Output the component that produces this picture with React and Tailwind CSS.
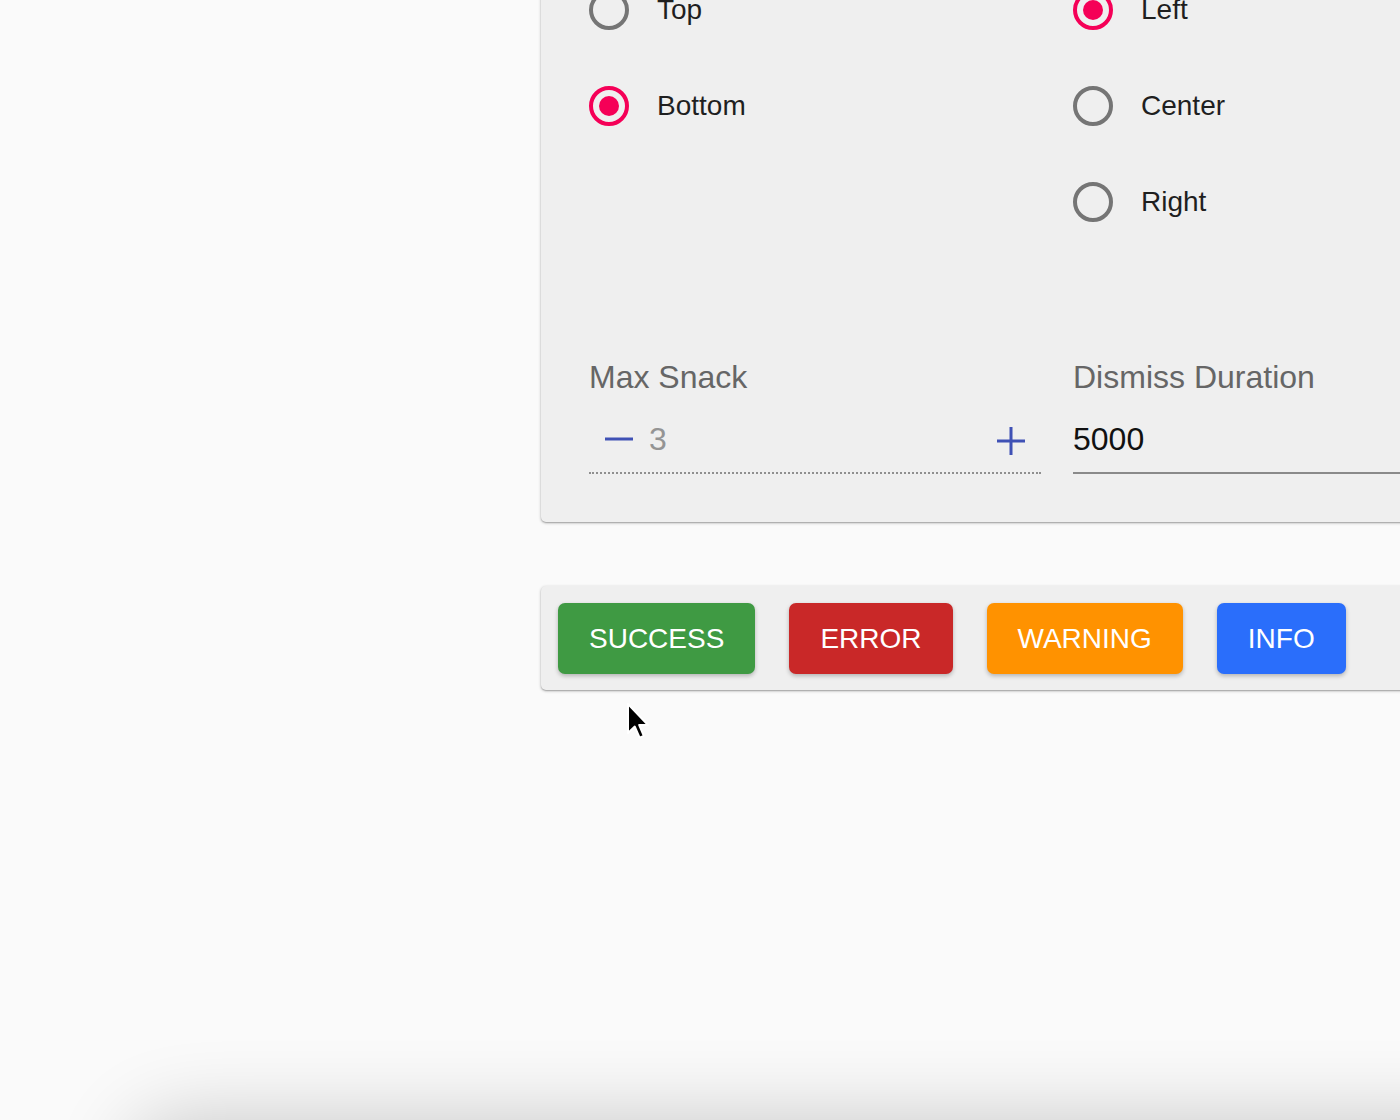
import { useState } from "react";

const font = { fontFamily: '"Liberation Sans", Arial, sans-serif' };

function Radio({ checked, label, onSelect }) {
  return (
    <button type="button" onClick={onSelect} className="flex h-[96px] items-center text-left">
      <span
        className={
          "flex h-[40px] w-[40px] shrink-0 items-center justify-center rounded-full border-4 " +
          (checked ? "border-[#f50057]" : "border-[#757575]")
        }
      >
        {checked && <span className="h-[20px] w-[20px] rounded-full bg-[#f50057]" />}
      </span>
      <span className="ml-[28px] text-[28px] leading-none text-[#1f1f1f]">{label}</span>
    </button>
  );
}

function Cursor() {
  return (
    <svg width="24" height="38" viewBox="0 0 12 19" className="pointer-events-none absolute left-[626px] top-[702px]">
      <path d="M1 1 L1 15.5 L4.4 12.3 L6.8 17.8 L8.9 16.9 L6.6 11.5 L11 11.5 Z" fill="#000" stroke="#fff" strokeWidth="1" strokeLinejoin="round" />
    </svg>
  );
}

export default function App() {
  const [vertical, setVertical] = useState("bottom");
  const [horizontal, setHorizontal] = useState("left");
  const [maxSnack, setMaxSnack] = useState(3);
  const [duration, setDuration] = useState("5000");

  const buttons = [
    { label: "SUCCESS", cls: "bg-[#3f9a43]" },
    { label: "ERROR", cls: "bg-[#c92828]" },
    { label: "WARNING", cls: "bg-[#ff9200]" },
    { label: "INFO", cls: "bg-[#2a6efb]" },
  ];

  return (
    <div style={font} className="relative h-[1120px] w-[1400px] overflow-hidden bg-[#fafafa]">
      <div className="pl-[541px]">
        <div className="mt-[-86px] w-[1000px] rounded-[5px] bg-[#efefef] px-[48px] pt-[48px] pb-[48px] shadow-[0_1px_3px_rgba(0,0,0,0.3),0_1px_1px_rgba(0,0,0,0.14)]">
          <div className="grid grid-cols-[452px_452px] gap-x-[32px]">
            <div className="flex flex-col">
              <Radio label="Top" checked={vertical === "top"} onSelect={() => setVertical("top")} />
              <Radio label="Bottom" checked={vertical === "bottom"} onSelect={() => setVertical("bottom")} />
            </div>
            <div className="flex flex-col">
              <Radio label="Left" checked={horizontal === "left"} onSelect={() => setHorizontal("left")} />
              <Radio label="Center" checked={horizontal === "center"} onSelect={() => setHorizontal("center")} />
              <Radio label="Right" checked={horizontal === "right"} onSelect={() => setHorizontal("right")} />
            </div>
          </div>

          <div className="mt-[111px] grid grid-cols-[452px_452px] gap-x-[32px]">
            <div>
              <div className="text-[32px] leading-none text-[#666]">Max Snack</div>
              <div className="mt-[12px] flex h-[69px] items-center border-b-2 border-dotted border-[#8f8f8f] pb-[2px]">
                <button type="button" onClick={() => setMaxSnack((n) => Math.max(1, n - 1))} className="flex h-[60px] w-[60px] items-center justify-center">
                  <svg width="30" height="30" viewBox="0 0 30 30" className="mt-[3px]">
                    <path d="M1 15 H29" stroke="#3f51b5" strokeWidth="3" />
                  </svg>
                </button>
                <span className="mt-[2px] flex-1 text-[32px] leading-none text-[#949494]">{maxSnack}</span>
                <button type="button" onClick={() => setMaxSnack((n) => n + 1)} className="ml-[2px] flex h-[60px] w-[60px] items-center justify-center">
                  <svg width="30" height="30" viewBox="0 0 30 30" className="mt-[6px]">
                    <path d="M1 15 H29 M15 1 V29" stroke="#3f51b5" strokeWidth="3" />
                  </svg>
                </button>
              </div>
            </div>
            <div>
              <div className="text-[32px] leading-none text-[#666]">Dismiss Duration</div>
              <div className="mt-[12px] flex h-[69px] items-center border-b-2 border-[#8a8a8a] pb-[2px]">
                <input
                  value={duration}
                  onChange={(e) => setDuration(e.target.value)}
                  className="mt-[4px] w-full bg-transparent text-[32px] leading-none text-[#111] outline-none"
                />
              </div>
            </div>
          </div>
        </div>

        <div className="mt-[64px] flex w-[1000px] gap-[34px] rounded-[5px] bg-[#efefef] px-[17px] pt-[17px] pb-[16px] shadow-[0_1px_3px_rgba(0,0,0,0.3),0_1px_1px_rgba(0,0,0,0.14)]">
          {buttons.map((b) => (
            <button
              key={b.label}
              type="button"
              className={"h-[71px] rounded-[7px] px-[31px] text-[28px] leading-none text-white shadow-[0_2px_4px_rgba(0,0,0,0.25)] " + b.cls}
            >
              {b.label}
            </button>
          ))}
        </div>
      </div>

      <Cursor />

      <div className="absolute left-[130px] top-[1124px] h-[400px] w-[1400px] rounded-[50px] bg-[#e6e6e6] shadow-[0_-6px_80px_rgba(0,0,0,0.2)]" />
    </div>
  );
}
